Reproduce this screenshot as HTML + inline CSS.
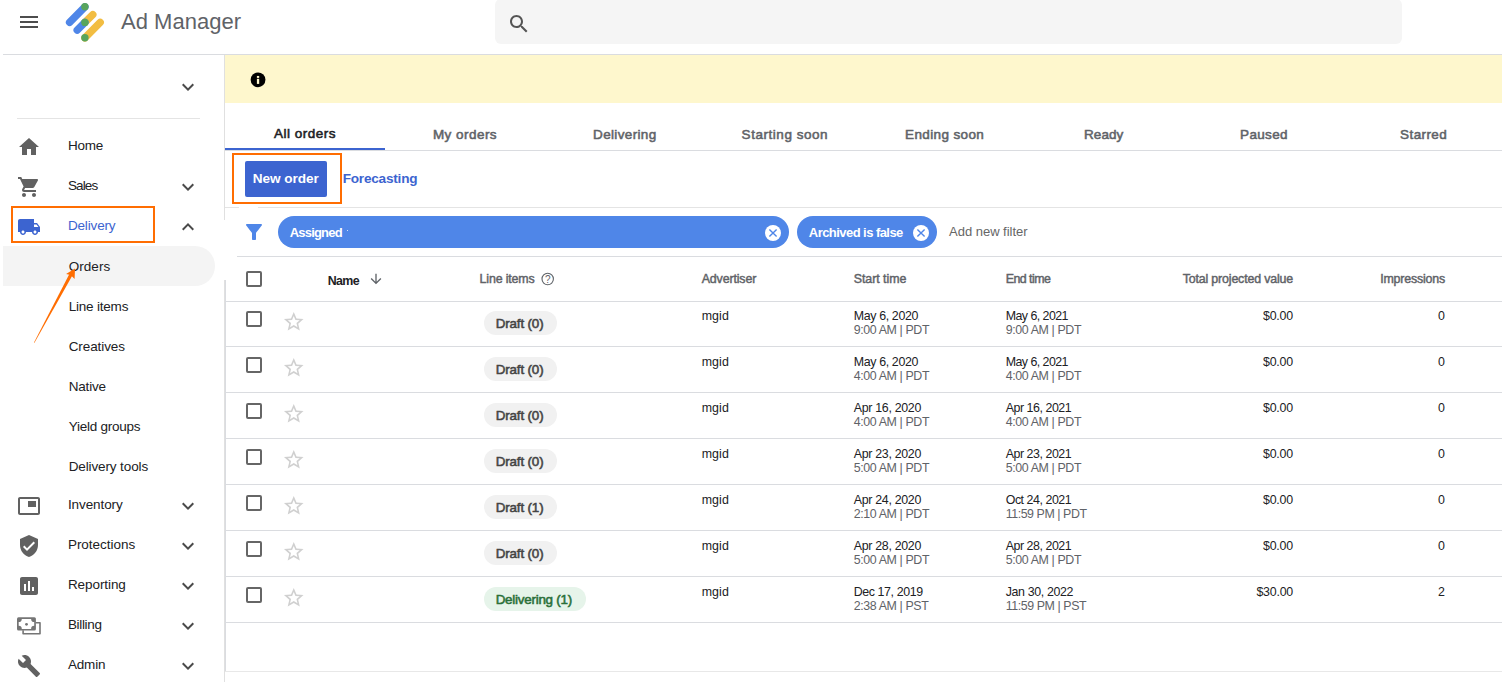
<!DOCTYPE html>
<html><head><meta charset="utf-8"><title>Ad Manager</title>
<style>
*{box-sizing:border-box;margin:0;padding:0}
html,body{width:1502px;height:682px;overflow:hidden;background:#fff}
body{font-family:"Liberation Sans",sans-serif;color:#202124;position:relative}
.abs{position:absolute}
.hline{position:absolute;height:1px;background:#dadce0}
.vline{position:absolute;width:1px;background:#dadce0}
.nav{position:absolute;left:67.900px;font-size:13.500px;line-height:20px;color:#202124;white-space:nowrap}
.sub{left:68.700px}
.ico{position:absolute;left:17px;width:24px;height:24px;fill:#616161}
.chev{position:absolute;left:176px;width:24px;height:24px;fill:#4a4a4a}
.tab{position:absolute;top:124.500px;font-size:13.500px;-webkit-text-stroke:.55px;color:#5f6368;line-height:20px;white-space:nowrap}
.th{position:absolute;top:271px;font-size:12.400px;-webkit-text-stroke:.45px;color:#5f6368;line-height:16px;white-space:nowrap}
.td{position:absolute;font-size:12.400px;line-height:14px;color:#202124;white-space:nowrap}
.td .s{color:#5f6368}
.r{text-align:right}
.cb{position:absolute;left:246px;width:16px;height:16px;border:2px solid #666;border-radius:2px;background:#fff}
.star{position:absolute;left:282.150px;width:23.500px;height:23.500px;fill:#d0d0d0}
.chip{position:absolute;left:484px;height:24px;border-radius:12px;background:#f1f1f1;color:#444;font-size:13.400px;-webkit-text-stroke:.55px;line-height:25.400px;padding:0 0 0 11.700px;white-space:nowrap}
.chip.g{background:#e6f4ea;color:#2a7039}
.fchip{position:absolute;top:216px;height:32px;border-radius:16px;background:#4f86e8;color:#fff;font-size:13px;font-weight:bold;line-height:33px;padding-left:11.800px;white-space:nowrap}
.x{position:absolute;top:8.500px;width:16px;height:16px}
#t0{letter-spacing:0.02px}
#t1{letter-spacing:-0.24px}
#t2{letter-spacing:-0.85px}
#t3{letter-spacing:-0.15px}
#t4{letter-spacing:0.05px}
#t5{letter-spacing:-0.20px}
#t6{letter-spacing:-0.09px}
#t7{letter-spacing:-0.19px}
#t8{letter-spacing:-0.25px}
#t9{letter-spacing:-0.12px}
#t10{letter-spacing:-0.08px}
#t11{letter-spacing:-0.02px}
#t12{letter-spacing:-0.07px}
#t13{letter-spacing:-0.32px}
#t14{letter-spacing:-0.14px}
#t15{letter-spacing:0.50px}
#t16{letter-spacing:0.46px}
#t17{letter-spacing:0.34px}
#t18{letter-spacing:0.54px}
#t19{letter-spacing:0.38px}
#t20{letter-spacing:0.02px}
#t21{letter-spacing:0.32px}
#t22{letter-spacing:0.40px}
#t23{letter-spacing:-0.04px}
#t24{letter-spacing:-0.22px}
#t25{letter-spacing:-0.82px}
#t26{letter-spacing:-0.55px}
#t27{letter-spacing:-0.01px}
#t28{letter-spacing:-0.62px}
#t29{letter-spacing:-0.16px}
#t30{letter-spacing:-0.13px}
#t31{letter-spacing:-0.04px}
#t32{letter-spacing:-0.52px}
#t33{letter-spacing:-0.16px}
#t34{letter-spacing:-0.18px}
#t35{letter-spacing:-0.15px}
#t36{letter-spacing:0.08px}
#t37{letter-spacing:-0.35px}
#t38{letter-spacing:-0.38px}
#t39{letter-spacing:-0.54px}
#t40{letter-spacing:-0.38px}
#t41{letter-spacing:-0.20px}
#t43{letter-spacing:-0.15px}
#t44{letter-spacing:0.08px}
#t45{letter-spacing:-0.35px}
#t46{letter-spacing:-0.38px}
#t47{letter-spacing:-0.54px}
#t48{letter-spacing:-0.38px}
#t49{letter-spacing:-0.20px}
#t51{letter-spacing:-0.15px}
#t52{letter-spacing:0.08px}
#t53{letter-spacing:-0.30px}
#t54{letter-spacing:-0.38px}
#t55{letter-spacing:-0.45px}
#t56{letter-spacing:-0.38px}
#t57{letter-spacing:-0.20px}
#t59{letter-spacing:-0.15px}
#t60{letter-spacing:0.08px}
#t61{letter-spacing:-0.30px}
#t62{letter-spacing:-0.38px}
#t63{letter-spacing:-0.45px}
#t64{letter-spacing:-0.38px}
#t65{letter-spacing:-0.20px}
#t67{letter-spacing:-0.15px}
#t68{letter-spacing:0.08px}
#t69{letter-spacing:-0.30px}
#t70{letter-spacing:-0.38px}
#t71{letter-spacing:-0.45px}
#t72{letter-spacing:-0.44px}
#t73{letter-spacing:-0.20px}
#t75{letter-spacing:-0.15px}
#t76{letter-spacing:0.08px}
#t77{letter-spacing:-0.30px}
#t78{letter-spacing:-0.38px}
#t79{letter-spacing:-0.45px}
#t80{letter-spacing:-0.38px}
#t81{letter-spacing:-0.20px}
#t83{letter-spacing:-0.24px}
#t84{letter-spacing:0.08px}
#t85{letter-spacing:-0.39px}
#t86{letter-spacing:-0.38px}
#t87{letter-spacing:-0.36px}
#t88{letter-spacing:-0.42px}
#t89{letter-spacing:-0.22px}
</style></head><body>

<svg class="abs" style="left:20px;top:16px" width="18" height="12"><rect width="18" height="2" fill="#4d4d4d"/><rect y="5" width="18" height="2" fill="#4d4d4d"/><rect y="10" width="18" height="2" fill="#4d4d4d"/></svg>
<svg class="abs" style="left:60px;top:0" width="50" height="46" viewBox="60 -0.400 50 46" stroke-linecap="round" stroke-width="7.400" fill="none">
<line x1="69.600" y1="22" x2="84.900" y2="6.400" stroke="#4f86e8"/>
<line x1="92.800" y1="14.200" x2="84.900" y2="22" stroke="#f2bd42"/>
<line x1="77.200" y1="29.800" x2="84.900" y2="22" stroke="#4f86e8"/>
<line x1="100.200" y1="22" x2="84.900" y2="37.400" stroke="#f2bd42"/>
<circle cx="84.900" cy="6.400" r="3.700" fill="#58a55c" stroke="none"/>
<circle cx="84.900" cy="22" r="3.700" fill="#58a55c" stroke="none"/>
<circle cx="84.900" cy="37.400" r="3.700" fill="#58a55c" stroke="none"/>
</svg>
<div class="abs" style="left:121px;top:8px;font-size:22px;line-height:28px;color:#5f6368;white-space:nowrap"><span id="t0">Ad Manager</span></div>
<div class="abs" style="left:495px;top:-1px;width:907px;height:45px;background:#f5f5f5;border-radius:6px"></div>
<svg class="abs" style="left:507px;top:12px" width="24" height="24" viewBox="0 0 24 24" fill="#555"><path d="M15.500 14h-.79l-.28-.27C15.410 12.590 16 11.110 16 9.500 16 5.910 13.090 3 9.500 3S3 5.910 3 9.500 5.910 16 9.500 16c1.610 0 3.090-.59 4.230-1.570l.27.28v.79l5 4.990L20.490 19l-4.990-5zm-6 0C7.010 14 5 11.990 5 9.500S7.010 5 9.500 5 14 7.010 14 9.500 11.990 14 9.500 14z"/></svg>
<div class="hline" style="left:3px;top:54px;width:1499px"></div>

<svg class="chev" style="top:75px" viewBox="0 0 24 24"><path d="M7.410 8.590L12 13.170l4.590-4.580L18 10l-6 6-6-6 1.410-1.410z"/></svg>
<div class="hline" style="left:17px;top:118px;width:183px;background:#e4e4e4"></div>
<svg class="ico" style="top:135px" viewBox="0 0 24 24"><path d="M10 20v-6h4v6h5v-8h3L12 3 2 12h3v8z"/></svg>
<div class="nav" style="top:135.5px"><span id="t1">Home</span></div>
<svg class="ico" style="top:175px" viewBox="0 0 24 24"><path d="M7 18c-1.100 0-1.990.9-1.990 2S5.900 22 7 22s2-.9 2-2-.9-2-2-2zM1 2v2h2l3.600 7.590-1.350 2.450c-.16.280-.25.610-.25.960 0 1.100.9 2 2 2h12v-2H7.420c-.14 0-.25-.11-.25-.25l.03-.12.900-1.630h7.450c.75 0 1.410-.41 1.750-1.030l3.580-6.490c.08-.14.120-.31.120-.48 0-.55-.45-1-1-1H5.210l-.94-2H1zm16 16c-1.100 0-1.990.9-1.990 2s.89 2 1.990 2 2-.9 2-2-.9-2-2-2z"/></svg>
<div class="nav" style="top:175.5px"><span id="t2">Sales</span></div>
<svg class="chev" style="top:175px" viewBox="0 0 24 24"><path d="M7.410 8.590L12 13.170l4.590-4.580L18 10l-6 6-6-6 1.410-1.410z"/></svg>
<div class="abs" style="left:11px;top:206px;width:144px;height:37px;border:2px solid #ff6d01"></div>
<svg class="ico" style="top:215px;fill:#3c64d0" viewBox="0 0 24 24"><path d="M20 8h-3V4H3c-1.100 0-2 .9-2 2v11h2c0 1.660 1.340 3 3 3s3-1.340 3-3h6c0 1.660 1.340 3 3 3s3-1.340 3-3h2v-5l-3-4zM6 18.500c-.83 0-1.500-.67-1.500-1.500s.67-1.500 1.500-1.500 1.500.67 1.500 1.500-.67 1.500-1.500 1.500zm13.500-9l1.960 2.500H17V9.500h2.500zm-1.500 9c-.83 0-1.500-.67-1.500-1.500s.67-1.500 1.500-1.500 1.500.67 1.500 1.500-.67 1.500-1.500 1.500z"/></svg>
<div class="nav" style="top:215.5px;color:#3c64d0"><span id="t3">Delivery</span></div>
<svg class="chev" style="top:215px" viewBox="0 0 24 24"><path d="M7.410 15.410L12 10.830l4.590 4.580L18 14l-6-6-6 6z"/></svg>
<div class="abs" style="left:3px;top:246px;width:212px;height:40px;background:#f4f4f4;border-radius:0 20px 20px 0"></div>
<div class="nav sub" style="top:257px"><span id="t4">Orders</span></div>
<div class="nav sub" style="top:296.5px"><span id="t5">Line items</span></div>
<div class="nav sub" style="top:336.5px"><span id="t6">Creatives</span></div>
<div class="nav sub" style="top:376.5px"><span id="t7">Native</span></div>
<div class="nav sub" style="top:416.5px"><span id="t8">Yield groups</span></div>
<div class="nav sub" style="top:456.5px"><span id="t9">Delivery tools</span></div>
<svg class="abs" style="left:30px;top:262px" width="52" height="84" viewBox="30 262 52 84" fill="#ff6d01"><path d="M34.300 342.900 L34 342.500 L69.500 273.700 L72.500 275.300 Z"/><path d="M75 268.600 L66.100 273.900 L70.600 275 L74.600 278.900 Z"/></svg>
<svg class="ico" style="top:494px" viewBox="0 0 24 24"><path d="M19 7h-8v6h8V7zm2-4H3c-1.100 0-2 .9-2 2v14c0 1.100.9 1.980 2 1.980h18c1.100 0 2-.88 2-1.980V5c0-1.100-.9-2-2-2zm0 16.010H3V4.980h18v14.030z"/></svg>
<div class="nav" style="top:494.5px"><span id="t10">Inventory</span></div>
<svg class="chev" style="top:494px" viewBox="0 0 24 24"><path d="M7.410 8.590L12 13.170l4.590-4.580L18 10l-6 6-6-6 1.410-1.410z"/></svg>
<svg class="ico" style="top:534px" viewBox="0 0 24 24"><path d="M12 1L3 5v6c0 5.550 3.840 10.740 9 12 5.160-1.260 9-6.450 9-12V5l-9-4zm-2 16l-4-4 1.410-1.410L10 14.170l6.590-6.590L18 9l-8 8z"/></svg>
<div class="nav" style="top:534.5px"><span id="t11">Protections</span></div>
<svg class="chev" style="top:534px" viewBox="0 0 24 24"><path d="M7.410 8.590L12 13.170l4.590-4.580L18 10l-6 6-6-6 1.410-1.410z"/></svg>
<svg class="ico" style="top:574px" viewBox="0 0 24 24"><path d="M19 3H5c-1.100 0-2 .9-2 2v14c0 1.100.9 2 2 2h14c1.100 0 2-.9 2-2V5c0-1.100-.9-2-2-2zM9 17H7v-7h2v7zm4 0h-2V7h2v10zm4 0h-2v-4h2v4z"/></svg>
<div class="nav" style="top:574.5px"><span id="t12">Reporting</span></div>
<svg class="chev" style="top:574px" viewBox="0 0 24 24"><path d="M7.410 8.590L12 13.170l4.590-4.580L18 10l-6 6-6-6 1.410-1.410z"/></svg>
<svg class="abs" style="left:14px;top:614px" width="30" height="24" viewBox="14 613.700 30 24" fill="#757575"><rect x="17" y="617" width="18.900" height="13.200" rx="1.500"/><path fill="#fff" d="M21.800 618.700H31.100A3.100 3.100 0 0 0 34.200 621.800V625.500A3.100 3.100 0 0 0 31.100 628.600H21.800A3.100 3.100 0 0 0 18.700 625.500V621.800A3.100 3.100 0 0 0 21.800 618.700Z"/><circle cx="26.500" cy="624" r="1.400"/><path d="M23.100 630V633.400H40V622.500H35.800" fill="none" stroke="#757575" stroke-width="1.600" stroke-linejoin="round"/></svg>
<div class="nav" style="top:614.5px"><span id="t13">Billing</span></div>
<svg class="chev" style="top:614px" viewBox="0 0 24 24"><path d="M7.410 8.590L12 13.170l4.590-4.580L18 10l-6 6-6-6 1.410-1.410z"/></svg>
<svg class="ico" style="top:654px" viewBox="0 0 24 24"><path d="M22.700 19l-9.100-9.100c.9-2.300.4-5-1.500-6.900-2-2-5-2.400-7.400-1.300L9 6 6 9 1.600 4.700C.4 7.100.9 10.100 2.900 12.100c1.900 1.900 4.600 2.400 6.900 1.500l9.100 9.100c.4.400 1 .4 1.400 0l2.300-2.300c.5-.4.500-1.100.1-1.400z"/></svg>
<div class="nav" style="top:654.5px"><span id="t14">Admin</span></div>
<svg class="chev" style="top:654px" viewBox="0 0 24 24"><path d="M7.410 8.590L12 13.170l4.590-4.580L18 10l-6 6-6-6 1.410-1.410z"/></svg>
<div class="vline" style="left:224px;top:55px;height:165px;background:#e0e0e0"></div><div class="vline" style="left:224px;top:280px;height:402px;background:#e0e0e0"></div><div class="vline" style="left:225px;top:280px;height:392px"></div>
<div class="abs" style="left:225px;top:55px;width:1277px;height:48px;background:#fef7cd"></div>
<svg class="abs" style="left:250px;top:72px" width="16" height="16" viewBox="0 0 16 16"><circle cx="8.050" cy="7.850" r="7.400" fill="#000"/><rect x="6.900" y="6.800" width="2.300" height="5.100" fill="#fef7cd"/><rect x="6.900" y="3.950" width="2.300" height="1.950" fill="#fef7cd"/></svg>

<div class="tab" style="left:273.9px;color:#202124;top:123.500px"><span id="t15">All orders</span></div>
<div class="tab" style="left:432.9px"><span id="t16">My orders</span></div>
<div class="tab" style="left:593.1px"><span id="t17">Delivering</span></div>
<div class="tab" style="left:741.6px"><span id="t18">Starting soon</span></div>
<div class="tab" style="left:905.0px"><span id="t19">Ending soon</span></div>
<div class="tab" style="left:1084.1px"><span id="t20">Ready</span></div>
<div class="tab" style="left:1240.1px"><span id="t21">Paused</span></div>
<div class="tab" style="left:1400.1px"><span id="t22">Starred</span></div>
<div class="hline" style="left:225px;top:150px;width:1277px"></div>
<div class="abs" style="left:225px;top:148px;width:160px;height:2px;background:#3c64d0"></div>
<div class="abs" style="left:232px;top:153px;width:110px;height:51px;border:2px solid #ff6d01"></div>
<div class="abs" style="left:245px;top:161px;width:82px;height:36px;background:#3c64d0;border-radius:2px;color:#fff;font-size:13.600px;font-weight:bold;line-height:36px;padding-left:7.700px;white-space:nowrap"><span id="t23">New order</span></div>
<div class="abs" style="left:342.700px;top:169px;font-size:13.600px;font-weight:bold;line-height:20px;color:#3c64d0;white-space:nowrap"><span id="t24">Forecasting</span></div>
<div class="hline" style="left:225px;top:207px;width:1277px;background:#e4e4e4"></div><div class="abs" style="left:239px;top:207px;width:19px;height:1px;background:#fff"></div>
<svg class="abs" style="left:242px;top:220px" width="24" height="24" viewBox="0 0 24 24" fill="#4f86e8"><path d="M4.250 5.610C6.270 8.200 10 13 10 13v6c0 .55.45 1 1 1h2c.55 0 1-.45 1-1v-6s3.720-4.800 5.740-7.390c.51-.66.040-1.610-.79-1.610H5.040c-.83 0-1.300.95-.79 1.610z"/></svg>
<div class="fchip" style="left:278px;width:511px"><span id="t25">Assigned</span><svg class="x" style="left:486.500px" viewBox="0 0 16 16"><circle cx="8" cy="8" r="8" fill="#fff"/><path d="M4.400 4.400l7.200 7.200M11.600 4.400l-7.200 7.200" stroke="#4f86e8" stroke-width="1.400"/></svg></div>
<div class="fchip" style="left:797px;width:140px"><span id="t26">Archived is false</span><svg class="x" style="left:115.500px" viewBox="0 0 16 16"><circle cx="8" cy="8" r="8" fill="#fff"/><path d="M4.400 4.400l7.200 7.200M11.600 4.400l-7.200 7.200" stroke="#4f86e8" stroke-width="1.400"/></svg></div>
<div class="abs" style="left:949px;top:224px;font-size:13px;line-height:16px;color:#666;white-space:nowrap"><span id="t27">Add new filter</span></div>
<div class="hline" style="left:237px;top:256px;width:1265px"></div>
<div class="abs" style="left:347.300px;top:230px;width:1.200px;height:1.200px;background:rgba(255,255,255,.75)"></div>
<div class="cb" style="top:271px"></div>
<div class="th" style="left:327.700px;top:273px;color:#202124;font-weight:bold;-webkit-text-stroke:0"><span id="t28">Name</span></div>
<svg class="abs" style="left:368px;top:271px" width="16" height="16" viewBox="0 0 24 24" fill="#5f6368"><path d="M20 12l-1.410-1.410L13 16.170V4h-2v12.170l-5.580-5.590L4 12l8 8 8-8z"/></svg>
<div class="th" style="left:479.600px"><span id="t29">Line items</span></div>
<svg class="abs" style="left:540px;top:271.300px" width="16" height="16" viewBox="0 0 16 16"><circle cx="7.700" cy="8" r="5.700" fill="none" stroke="#5f6368" stroke-width="1.100"/><text x="7.700" y="11.500" font-size="10" font-family="Liberation Sans, sans-serif" text-anchor="middle" fill="#5f6368">?</text></svg>
<div class="th" style="left:701.700px"><span id="t30">Advertiser</span></div>
<div class="th" style="left:853.700px"><span id="t31">Start time</span></div>
<div class="th" style="left:1005.700px"><span id="t32">End time</span></div>
<div class="th r" style="left:1093px;width:200px"><span id="t33">Total projected value</span></div>
<div class="th r" style="left:1245px;width:200px"><span id="t34">Impressions</span></div>
<div class="hline" style="left:225px;top:301px;width:1277px"></div>
<div class="cb" style="top:311px"></div>
<svg class="star" style="top:309.6px" viewBox="0 0 24 24"><path d="M22 9.240l-7.190-.62L12 2 9.190 8.630 2 9.240l5.460 4.730L5.820 21 12 17.270 18.180 21l-1.630-7.030L22 9.240zM12 15.400l-3.760 2.270 1-4.280-3.320-2.880 4.380-.38L12 6.100l1.710 4.040 4.380.38-3.320 2.880 1 4.280L12 15.400z"/></svg>
<div class="chip" style="top:311px;width:73px"><span id="t35">Draft (0)</span></div>
<div class="td" style="left:701.700px;top:309.3px"><span id="t36">mgid</span></div>
<div class="td" style="left:853.700px;top:309.3px"><span id="t37">May 6, 2020</span><br><span class="s"><span id="t38">9:00 AM | PDT</span></span></div>
<div class="td" style="left:1005.700px;top:309.3px"><span id="t39">May 6, 2021</span><br><span class="s"><span id="t40">9:00 AM | PDT</span></span></div>
<div class="td r" style="left:1093px;width:200px;top:309.3px"><span id="t41">$0.00</span></div>
<div class="td r" style="left:1245px;width:200px;top:309.3px"><span id="t42">0</span></div>
<div class="hline" style="left:225px;top:346px;width:1277px"></div>
<div class="cb" style="top:357px"></div>
<svg class="star" style="top:355.6px" viewBox="0 0 24 24"><path d="M22 9.240l-7.190-.62L12 2 9.190 8.630 2 9.240l5.460 4.730L5.820 21 12 17.270 18.180 21l-1.630-7.030L22 9.240zM12 15.400l-3.760 2.270 1-4.280-3.320-2.880 4.380-.38L12 6.100l1.710 4.040 4.380.38-3.320 2.880 1 4.280L12 15.400z"/></svg>
<div class="chip" style="top:357px;width:73px"><span id="t43">Draft (0)</span></div>
<div class="td" style="left:701.700px;top:355.3px"><span id="t44">mgid</span></div>
<div class="td" style="left:853.700px;top:355.3px"><span id="t45">May 6, 2020</span><br><span class="s"><span id="t46">4:00 AM | PDT</span></span></div>
<div class="td" style="left:1005.700px;top:355.3px"><span id="t47">May 6, 2021</span><br><span class="s"><span id="t48">4:00 AM | PDT</span></span></div>
<div class="td r" style="left:1093px;width:200px;top:355.3px"><span id="t49">$0.00</span></div>
<div class="td r" style="left:1245px;width:200px;top:355.3px"><span id="t50">0</span></div>
<div class="hline" style="left:225px;top:392px;width:1277px"></div>
<div class="cb" style="top:403px"></div>
<svg class="star" style="top:401.6px" viewBox="0 0 24 24"><path d="M22 9.240l-7.190-.62L12 2 9.190 8.630 2 9.240l5.460 4.730L5.820 21 12 17.270 18.180 21l-1.630-7.030L22 9.240zM12 15.400l-3.760 2.270 1-4.280-3.320-2.880 4.380-.38L12 6.100l1.710 4.040 4.380.38-3.320 2.880 1 4.280L12 15.400z"/></svg>
<div class="chip" style="top:403px;width:73px"><span id="t51">Draft (0)</span></div>
<div class="td" style="left:701.700px;top:401.3px"><span id="t52">mgid</span></div>
<div class="td" style="left:853.700px;top:401.3px"><span id="t53">Apr 16, 2020</span><br><span class="s"><span id="t54">4:00 AM | PDT</span></span></div>
<div class="td" style="left:1005.700px;top:401.3px"><span id="t55">Apr 16, 2021</span><br><span class="s"><span id="t56">4:00 AM | PDT</span></span></div>
<div class="td r" style="left:1093px;width:200px;top:401.3px"><span id="t57">$0.00</span></div>
<div class="td r" style="left:1245px;width:200px;top:401.3px"><span id="t58">0</span></div>
<div class="hline" style="left:225px;top:438px;width:1277px"></div>
<div class="cb" style="top:449px"></div>
<svg class="star" style="top:447.6px" viewBox="0 0 24 24"><path d="M22 9.240l-7.190-.62L12 2 9.190 8.630 2 9.240l5.460 4.730L5.820 21 12 17.270 18.180 21l-1.630-7.030L22 9.240zM12 15.400l-3.760 2.270 1-4.280-3.320-2.880 4.380-.38L12 6.100l1.710 4.040 4.380.38-3.320 2.880 1 4.280L12 15.400z"/></svg>
<div class="chip" style="top:449px;width:73px"><span id="t59">Draft (0)</span></div>
<div class="td" style="left:701.700px;top:447.3px"><span id="t60">mgid</span></div>
<div class="td" style="left:853.700px;top:447.3px"><span id="t61">Apr 23, 2020</span><br><span class="s"><span id="t62">5:00 AM | PDT</span></span></div>
<div class="td" style="left:1005.700px;top:447.3px"><span id="t63">Apr 23, 2021</span><br><span class="s"><span id="t64">5:00 AM | PDT</span></span></div>
<div class="td r" style="left:1093px;width:200px;top:447.3px"><span id="t65">$0.00</span></div>
<div class="td r" style="left:1245px;width:200px;top:447.3px"><span id="t66">0</span></div>
<div class="hline" style="left:225px;top:484px;width:1277px"></div>
<div class="cb" style="top:495px"></div>
<svg class="star" style="top:493.6px" viewBox="0 0 24 24"><path d="M22 9.240l-7.190-.62L12 2 9.190 8.630 2 9.240l5.460 4.730L5.820 21 12 17.270 18.180 21l-1.630-7.030L22 9.240zM12 15.400l-3.760 2.270 1-4.280-3.320-2.880 4.380-.38L12 6.100l1.710 4.040 4.380.38-3.320 2.880 1 4.280L12 15.400z"/></svg>
<div class="chip" style="top:495px;width:73px"><span id="t67">Draft (1)</span></div>
<div class="td" style="left:701.700px;top:493.3px"><span id="t68">mgid</span></div>
<div class="td" style="left:853.700px;top:493.3px"><span id="t69">Apr 24, 2020</span><br><span class="s"><span id="t70">2:10 AM | PDT</span></span></div>
<div class="td" style="left:1005.700px;top:493.3px"><span id="t71">Oct 24, 2021</span><br><span class="s"><span id="t72">11:59 PM | PDT</span></span></div>
<div class="td r" style="left:1093px;width:200px;top:493.3px"><span id="t73">$0.00</span></div>
<div class="td r" style="left:1245px;width:200px;top:493.3px"><span id="t74">0</span></div>
<div class="hline" style="left:225px;top:530px;width:1277px"></div>
<div class="cb" style="top:541px"></div>
<svg class="star" style="top:539.6px" viewBox="0 0 24 24"><path d="M22 9.240l-7.190-.62L12 2 9.190 8.630 2 9.240l5.460 4.730L5.820 21 12 17.270 18.180 21l-1.630-7.030L22 9.240zM12 15.400l-3.760 2.270 1-4.280-3.320-2.880 4.380-.38L12 6.100l1.710 4.040 4.380.38-3.320 2.880 1 4.280L12 15.400z"/></svg>
<div class="chip" style="top:541px;width:73px"><span id="t75">Draft (0)</span></div>
<div class="td" style="left:701.700px;top:539.3px"><span id="t76">mgid</span></div>
<div class="td" style="left:853.700px;top:539.3px"><span id="t77">Apr 28, 2020</span><br><span class="s"><span id="t78">5:00 AM | PDT</span></span></div>
<div class="td" style="left:1005.700px;top:539.3px"><span id="t79">Apr 28, 2021</span><br><span class="s"><span id="t80">5:00 AM | PDT</span></span></div>
<div class="td r" style="left:1093px;width:200px;top:539.3px"><span id="t81">$0.00</span></div>
<div class="td r" style="left:1245px;width:200px;top:539.3px"><span id="t82">0</span></div>
<div class="hline" style="left:225px;top:576px;width:1277px"></div>
<div class="cb" style="top:587px"></div>
<svg class="star" style="top:585.6px" viewBox="0 0 24 24"><path d="M22 9.240l-7.190-.62L12 2 9.190 8.630 2 9.240l5.460 4.730L5.820 21 12 17.270 18.180 21l-1.630-7.030L22 9.240zM12 15.400l-3.760 2.270 1-4.280-3.320-2.880 4.380-.38L12 6.100l1.710 4.040 4.380.38-3.320 2.880 1 4.280L12 15.400z"/></svg>
<div class="chip g" style="top:587px;width:102px"><span id="t83">Delivering (1)</span></div>
<div class="td" style="left:701.700px;top:585.3px"><span id="t84">mgid</span></div>
<div class="td" style="left:853.700px;top:585.3px"><span id="t85">Dec 17, 2019</span><br><span class="s"><span id="t86">2:38 AM | PST</span></span></div>
<div class="td" style="left:1005.700px;top:585.3px"><span id="t87">Jan 30, 2022</span><br><span class="s"><span id="t88">11:59 PM | PST</span></span></div>
<div class="td r" style="left:1093px;width:200px;top:585.3px"><span id="t89">$30.00</span></div>
<div class="td r" style="left:1245px;width:200px;top:585.3px"><span id="t90">2</span></div>
<div class="hline" style="left:225px;top:622px;width:1277px"></div>
<div class="hline" style="left:225px;top:671px;width:1277px;background:#e8e8e8"></div>
</body></html>
